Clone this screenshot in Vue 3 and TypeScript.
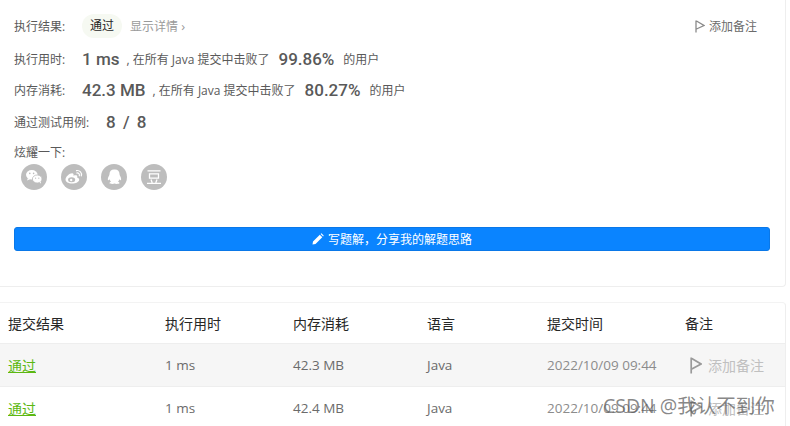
<script setup lang="ts">
interface Sub { status: string; time: string; mem: string; lang: string; date: string }
const subs: Sub[] = [
  { status: '通过', time: '1 ms', mem: '42.3 MB', lang: 'Java', date: '2022/10/09 09:44' },
  { status: '通过', time: '1 ms', mem: '42.4 MB', lang: 'Java', date: '2022/10/09 09:44' },
]
const heads = ['提交结果', '执行用时', '内存消耗', '语言', '提交时间', '备注']
</script>

<template>
  <div class="page">
    <section class="card">
      <div class="row first">
        <span class="label">执行结果:</span>
        <span class="pill">通过</span>
        <span class="detail">显示详情 <span class="chev">›</span></span>
        <span class="note">
          <svg class="flag" width="10" height="13" viewBox="0 0 10 13"><path d="M1 0.5V12.5M1.500 1L9 5.500L1.500 9" fill="none" stroke="#8a8a8a" stroke-width="1.300"/></svg>
          添加备注
        </span>
      </div>
      <div class="row r2">
        <span class="label">执行用时:</span>
        <b class="big w1">1 ms</b>
        <span class="txt">, 在所有 Java 提交中击败了</span>
        <b class="big pct">99.86%</b>
        <span class="txt">的用户</span>
      </div>
      <div class="row r3">
        <span class="label">内存消耗:</span>
        <b class="big w1">42.3 MB</b>
        <span class="txt">, 在所有 Java 提交中击败了</span>
        <b class="big pct">80.27%</b>
        <span class="txt">的用户</span>
      </div>
      <div class="row r4">
        <span class="label lw">通过测试用例:</span>
        <b class="big spaced">8 / 8</b>
      </div>
      <div class="share-label">炫耀一下:</div>
      <div class="icons">
        <span class="ic">
          <svg width="26" height="26" viewBox="0 0 26 26"><ellipse cx="10.800" cy="10.800" rx="5.800" ry="4.800" fill="#fff"/><path d="M7 14l-1 2.600 3-1.400z" fill="#fff"/><ellipse cx="16.200" cy="15" rx="4.800" ry="4" fill="#fff" stroke="#bdbdbd" stroke-width=".8"/><path d="M18.500 18l1.500 1.800-.2-2.600z" fill="#fff"/><circle cx="8.800" cy="9.400" r=".8" fill="#bdbdbd"/><circle cx="12.600" cy="9.400" r=".8" fill="#bdbdbd"/><circle cx="14.600" cy="14.200" r=".6" fill="#bdbdbd"/><circle cx="17.800" cy="14.200" r=".6" fill="#bdbdbd"/></svg>
        </span>
        <span class="ic">
          <svg width="26" height="26" viewBox="0 0 26 26"><path d="M11 19.500c-3.600 0-6.500-1.600-6.500-4 0-2.600 3.800-6.200 6.600-6.200 1.500 0 1.700 1.200 1.300 2.400 2-.7 3.900-.7 3.900.7 0 .5-.1.800-.4 1.100 1.300.4 2.300 1 2.300 2.200 0 2-3.200 3.800-7.200 3.800z" fill="#fff"/><ellipse cx="10.600" cy="15.800" rx="3.600" ry="2.500" fill="#bdbdbd"/><circle cx="10.200" cy="16" r="1.200" fill="#fff"/><path d="M15.500 6.600c3.200-.6 5.800 2.200 4.800 5.300M15.800 9c1.700-.3 3 1.200 2.500 2.800" fill="none" stroke="#fff" stroke-width="1.200" stroke-linecap="round"/></svg>
        </span>
        <span class="ic">
          <svg width="26" height="26" viewBox="0 0 26 26"><path d="M13 5.500c-2.800 0-4.500 2-4.500 4.600 0 .8-.2 1.300-.6 2-.8 1.400-1.400 3-.9 4 .3.500 1 0 1.500-.8.300 1 .8 1.800 1.500 2.400-.9.300-1.500.8-1.500 1.300 0 .6 1.300.9 2.800.9 1 0 1.800-.2 2.200-.5.400.3 1.200.5 2.200.5 1.500 0 2.800-.3 2.800-.9 0-.5-.6-1-1.500-1.300.7-.6 1.200-1.400 1.500-2.400.5.800 1.200 1.300 1.500.8.500-1-.1-2.600-.9-4-.4-.7-.6-1.200-.6-2 0-2.600-1.700-4.600-4.500-4.600z" fill="#fff"/></svg>
        </span>
        <span class="ic">
          <svg width="26" height="26" viewBox="0 0 26 26"><path d="M6.500 6.800H19.500M8.500 9.800H17.500V14.200H8.500ZM10 15.500L11.200 18.800M16 15.500L14.800 18.800M6 19.300H20" fill="none" stroke="#fff" stroke-width="1.300"/></svg>
        </span>
      </div>
      <button class="solution" type="button">
        <svg width="12" height="12" viewBox="0 0 12 12"><path d="M0.500 11.500L1 8.500 7.800 1.700 10.300 4.200 3.500 11ZM8.600 0.900L9.400 0.300 11.700 2.600 11.100 3.400Z" fill="#fff"/></svg>
        写题解，分享我的解题思路
      </button>
    </section>

    <section class="table">
      <div class="tr head">
        <span v-for="h in heads" :key="h">{{ h }}</span>
      </div>
      <div v-for="(s, i) in subs" :key="i" class="tr body" :class="{ odd: i === 0 }">
        <span class="ok">{{ s.status }}</span>
        <span>{{ s.time }}</span>
        <span>{{ s.mem }}</span>
        <span>{{ s.lang }}</span>
        <span class="date">{{ s.date }}</span>
        <span class="add">
          <svg width="12" height="17" viewBox="0 0 12 17"><path d="M1.200 0.500V16.500M1.800 1.500L11 7L1.800 12" fill="none" stroke="#9a9a9a" stroke-width="1.700"/></svg>
          添加备注
        </span>
      </div>
    </section>

    <div class="watermark">CSDN @我认不到你</div>
  </div>
</template>

<style>
html, body { margin: 0; background: #fff; }
</style>

<style scoped>
.page {
  position: relative;
  width: 790px;
  height: 426px;
  overflow: hidden;
  background: #fff;
  font-family: "Open Sans", "Noto Sans CJK SC", sans-serif;
  font-size: 12px;
  color: #595959;
}
.card {
  box-sizing: border-box;
  width: 786px;
  height: 287px;
  padding: 0 16px 0 14px;
  border: 1px solid #eee;
  border-width: 0 1px 1px 0;
  border-radius: 0 0 4px 0;
  background: #fff;
}
.row { display: flex; align-items: center; height: 24px; white-space: nowrap; }
.first { padding-top: 14px; height: 24px; }
.r2 { margin-top: 9px; }
.r3 { margin-top: 7px; }
.r4 { margin-top: 8px; }
.label { width: 68px; flex: none; color: #595959; }
.lw { width: 92px; }
.pill {
  box-sizing: border-box;
  width: 40px;
  height: 24px;
  line-height: 24px;
  text-align: center;
  border-radius: 12px;
  background: #f6f9f2;
  color: #262626;
}
.detail { margin-left: 8px; color: #9a9a9a; }
.chev { font-size: 13px; }
.note {
  margin-left: auto;
  margin-right: 12px;
  display: flex;
  align-items: center;
  gap: 4px;
  color: #6b6b6b;
}
.big {
  font-family: Roboto, "Noto Sans", sans-serif;
  font-weight: 500;
  font-size: 17px;
  color: #595959;
  white-space: pre;
}
.spaced { word-spacing: 3px; }
.w1 { margin-right: 7px; }
.pct { margin: 0 9px; }
.share-label { margin-top: 9px; height: 20px; line-height: 20px; }
.icons { display: flex; gap: 14px; padding: 1px 0 0 7px; }
.ic {
  width: 26px;
  height: 26px;
  border-radius: 50%;
  background: #bdbdbd;
  display: block;
}
.ic svg { display: block; }
.solution {
  display: flex;
  align-items: center;
  justify-content: center;
  gap: 4px;
  width: 756px;
  height: 24px;
  margin-top: 37px;
  padding: 0;
  border: 1px solid #0a78e8;
  border-radius: 3px;
  background: #0a84ff;
  color: #fff;
  font: inherit;
}
.table {
  box-sizing: border-box;
  width: 786px;
  margin-top: 15px;
  border-top: 1px solid #f3f3f3;
  border-right: 1px solid #eee;
  border-radius: 0 4px 0 0;
  background: #fff;
}
.tr {
  display: grid;
  grid-template-columns: 157px 128px 134px 120px 138px 1fr;
  align-items: center;
  padding-left: 8px;
  border-bottom: 1px solid #eeeeee;
}
.head { height: 40px; font-size: 14px; color: #262626; }
.body { height: 42px; font-size: 13.500px; color: #6b6b6b; }
.odd { background: #f6f6f6; }
.ok { font-size: 14px; color: #5cb811; text-decoration: underline; text-decoration-thickness: 1px; text-underline-offset: 1px; }
.date { color: #8c8c8c; }
.add {
  display: flex;
  align-items: center;
  gap: 6px;
  margin-left: 5px;
  font-size: 14px;
  color: #c0c0c0;
}
.watermark {
  position: absolute;
  left: 603px;
  top: 393px;
  font-size: 19.500px;
  line-height: 26px;
  color: rgba(90, 90, 90, 0.72);
  white-space: nowrap;
}
</style>
